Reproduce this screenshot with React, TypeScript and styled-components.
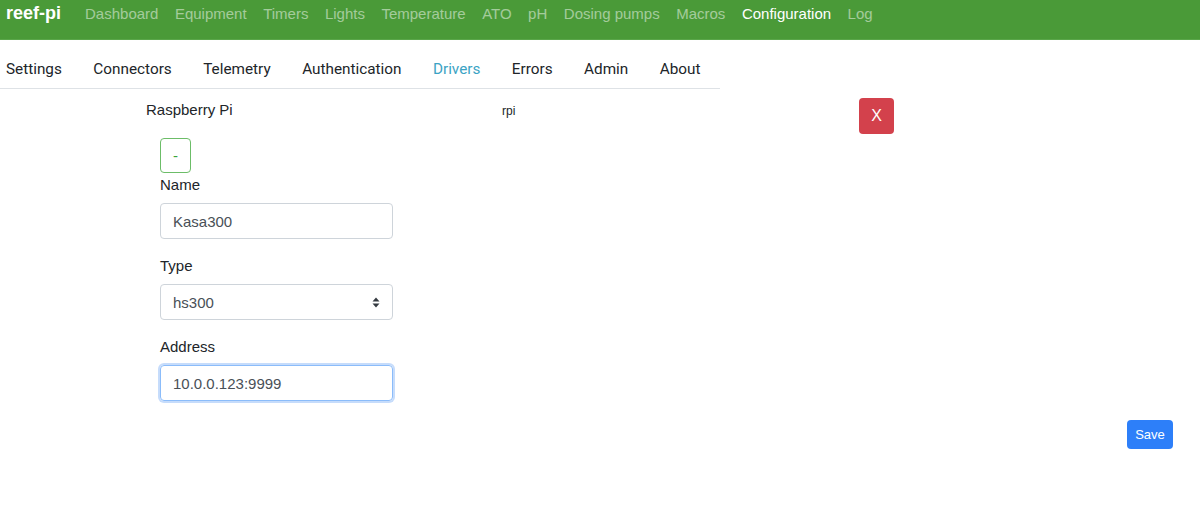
import React from "react";
import styled, { createGlobalStyle } from "styled-components";

const Global = createGlobalStyle`
  html, body { margin: 0; padding: 0; background: #fff; }
  body { font-family: "Liberation Sans", Arial, sans-serif; color: #212529; }
  * { box-sizing: border-box; }
`;

const Navbar = styled.nav`
  height: 40px;
  background: #4a9a38;
  display: flex;
  align-items: center;
  padding: 0 0 0 6px;
  border-bottom: 1px solid #5aa64a;
`;

const Brand = styled.span`
  color: #fff;
  font-weight: bold;
  font-size: 18px;
  margin-right: 24px;
  margin-top: -13px;
`;

const NavItem = styled.span<{ $active?: boolean }>`
  color: ${(p) => (p.$active ? "#fff" : "rgba(255,255,255,0.5)")};
  font-size: 15px;
  margin-right: 16.5px;
  margin-top: -13px;
`;

const Tabs = styled.div`
  width: 720px;
  display: flex;
  align-items: center;
  height: 49px;
  padding-top: 9px;
  border-bottom: 1px solid #dee2e6;
  padding-left: 6px;
`;

const Tab = styled.span<{ $active?: boolean }>`
  font-family: "Roboto", "Liberation Sans", sans-serif;
  font-size: 15.3px;
  color: ${(p) => (p.$active ? "#3ba3c4" : "#212529")};
  margin-right: 31.5px;
`;

const Content = styled.div`
  position: relative;
  height: 417px;
`;

const DriverRow = styled.div`
  display: flex;
  align-items: flex-start;
  padding-top: 9px;
  padding-left: 146px;
`;

const DriverName = styled.span`
  font-size: 15px;
  width: 356px;
  margin-top: 3px;
`;

const DriverType = styled.span`
  font-size: 12px;
  width: 357px;
  margin-top: 6px;
`;

const DangerButton = styled.button`
  width: 35px;
  height: 36px;
  border: none;
  border-radius: 4px;
  background: #d3414c;
  color: #fff;
  font-family: "Liberation Sans", Arial, sans-serif;
  font-size: 16px;
  padding: 0;
`;

const Form = styled.div`
  padding-left: 160px;
  margin-top: 4px;
  width: 393px;
  box-sizing: content-box;
`;

const ToggleButton = styled.button`
  width: 31px;
  height: 35px;
  border: 1px solid #6cbd68;
  border-radius: 4px;
  background: #fff;
  color: #39a33a;
  font-size: 15px;
  padding: 0;
  display: block;
  font-family: "Liberation Sans", Arial, sans-serif;
`;

const Group = styled.div`
  margin-bottom: 18px;
`;

const Label = styled.div`
  font-size: 15px;
  height: 19px;
  margin-top: 3px;
  margin-bottom: 8px;
`;

const Field = styled.div<{ $focus?: boolean }>`
  width: 233px;
  height: 36px;
  border: 1px solid ${(p) => (p.$focus ? "#8bbcfa" : "#ced4da")};
  border-radius: 4px;
  box-shadow: ${(p) => (p.$focus ? "0 0 0 2px #c6dcfb" : "none")};
  display: flex;
  align-items: center;
  justify-content: space-between;
  padding: 0 12px;
  font-size: 15px;
  color: #495057;
`;

const SaveButton = styled.button`
  position: absolute;
  right: 27px;
  top: 331px;
  width: 46px;
  height: 29px;
  border: none;
  border-radius: 4px;
  background: #2d7ff9;
  color: #fff;
  font-size: 13px;
  padding: 0;
  font-family: "Liberation Sans", Arial, sans-serif;
`;

const Caret = () => (
  <svg width="8" height="11" viewBox="0 0 8 11">
    <path d="M4 0.5 L7.5 4.5 H0.5 Z M4 10.5 L7.5 6.5 H0.5 Z" fill="#343a40" />
  </svg>
);

const navItems = ["Dashboard", "Equipment", "Timers", "Lights", "Temperature", "ATO", "pH", "Dosing pumps", "Macros", "Configuration", "Log"];
const tabs = ["Settings", "Connectors", "Telemetry", "Authentication", "Drivers", "Errors", "Admin", "About"];

export default function App() {
  return (
    <>
      <Global />
      <Navbar>
        <Brand>reef-pi</Brand>
        {navItems.map((n) => (
          <NavItem key={n} $active={n === "Configuration"}>{n}</NavItem>
        ))}
      </Navbar>
      <Tabs>
        {tabs.map((t) => (
          <Tab key={t} $active={t === "Drivers"}>{t}</Tab>
        ))}
      </Tabs>
      <Content>
        <DriverRow>
          <DriverName>Raspberry Pi</DriverName>
          <DriverType>rpi</DriverType>
          <DangerButton>X</DangerButton>
        </DriverRow>
        <Form>
          <ToggleButton>-</ToggleButton>
          <Group>
            <Label>Name</Label>
            <Field>Kasa300</Field>
          </Group>
          <Group>
            <Label>Type</Label>
            <Field>hs300<Caret /></Field>
          </Group>
          <Group>
            <Label>Address</Label>
            <Field $focus>10.0.0.123:9999</Field>
          </Group>
        </Form>
        <SaveButton>Save</SaveButton>
      </Content>
    </>
  );
}
